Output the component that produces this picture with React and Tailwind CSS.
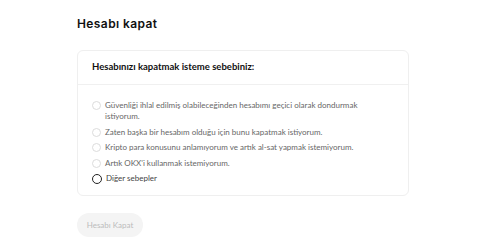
import React from "react";

const items = [
  ["Güvenliği ihlal edilmiş olabileceğinden hesabımı geçici olarak dondurmak", "istiyorum."],
  ["Zaten başka bir hesabım olduğu için bunu kapatmak istiyorum."],
  ["Kripto para konusunu anlamıyorum ve artık al-sat yapmak istemiyorum."],
  ["Artık OKX'i kullanmak istemiyorum."],
];

export default function App() {
  return (
    <div
      className="w-[500px] h-[250px] bg-white pl-[77px] pt-[17px]"
      style={{ fontFamily: "Lato, 'Noto Sans', sans-serif" }}
    >
      <h1
        className="text-[12px] leading-[14px] font-semibold text-[#111] tracking-[0.4px]"
        style={{ fontFamily: "Inter, sans-serif" }}
      >
        Hesabı kapat
      </h1>
      <div className="mt-[19px] w-[332px] rounded-[6px] border border-[#efefef]">
        <div className="h-[34px] px-[14px] flex items-center border-b border-[#f0f0f0]">
          <span className="text-[9.5px] font-bold text-[#111]">Hesabınızı kapatmak isteme sebebiniz:</span>
        </div>
        <div className="px-[14px] pt-[15px] pb-[11px] flex flex-col gap-[4.5px]">
          {items.map((lines, i) => (
            <div key={i} className="flex items-start gap-[4px]">
              <span className="mt-[1px] w-[9px] h-[9px] rounded-full border border-[#dcdcdc] shrink-0" />
              <span className="text-[8px] leading-[11px] text-[#666]">
                {lines[0]}
                {lines[1] && (
                  <>
                    <br />
                    {lines[1]}
                  </>
                )}
              </span>
            </div>
          ))}
          <div className="flex items-center gap-[4px]">
            <span className="w-[10px] h-[10px] rounded-full border-[1.3px] border-[#222] shrink-0" />
            <span className="text-[8px] leading-[11px] text-[#444]">Diğer sebepler</span>
          </div>
        </div>
      </div>
      <button className="mt-[17px] h-[24px] w-[66px] rounded-full bg-[#f4f4f4] text-[8px] text-[#bcbcbc]">
        Hesabı Kapat
      </button>
    </div>
  );
}
